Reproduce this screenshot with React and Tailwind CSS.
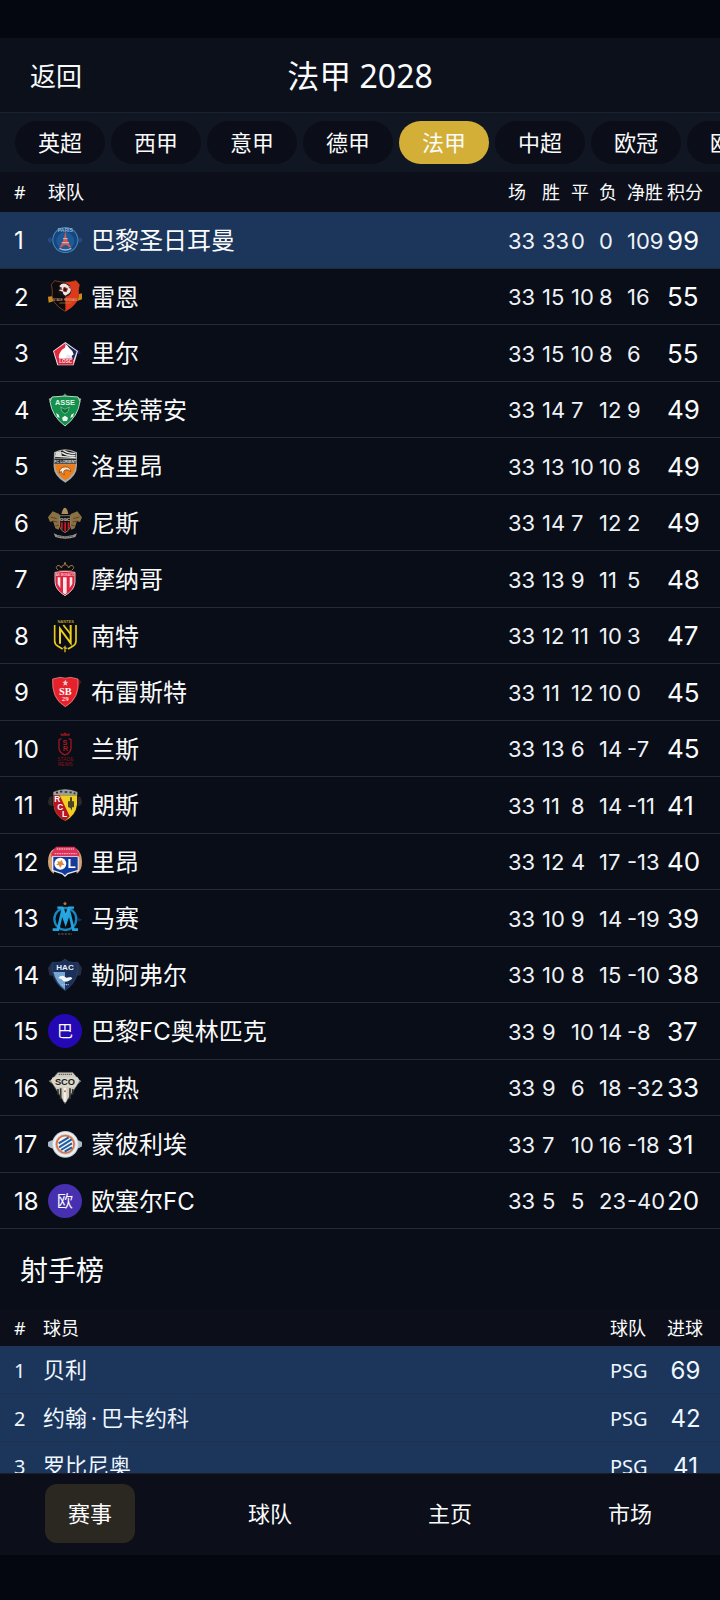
import { useState } from "react";

// 队徽统一画在 102x102 的画布上
function Badge({ children }) {
  return (
    <svg viewBox="0 0 102 102" className="block size-[34px]" aria-hidden="true">
      {children}
    </svg>
  );
}

const badgeFont = "Liberation Sans, sans-serif";

const badges = {
  psg: (
    <Badge>
      <path d="M0 46l8-4 6 8-6 10-8-4zM102 46l-8-4-6 8 6 10 8-4z" fill="#234a7c" />
      <circle cx="52" cy="51" r="39" fill="#4d86b5" />
      <circle cx="52" cy="51" r="36" fill="#14467f" />
      <circle cx="52" cy="54" r="27" fill="#1d5a97" />
      <text x="52" y="27" fontSize="15" fontWeight="bold" textAnchor="middle" fill="#8fb4d2" fontFamily={badgeFont}>
        PARIS
      </text>
      <path d="M52 24l4 22 5 13 9 14h-8c-3-9-17-9-20 0h-8l9-14 5-13z" fill="#d9564c" />
      <path d="M45 47h14M41 59h22" stroke="#b9c8da" strokeWidth="3" />
      <path d="M34 76q18 10 36 0" stroke="#9dbdd8" strokeWidth="4" fill="none" />
    </Badge>
  ),
  rennes: (
    <Badge>
      <path d="M0 50l16-2v16l-14 4zM102 40l-16 4v20l16-6z" fill="#c98a1c" />
      <path d="M20 2q32 10 64 0l10 12-3 18q8 36-39 62Q5 70 13 32L10 14z" fill="#0c0a0c" stroke="#a65a24" strokeWidth="2" />
      <path d="M52 7q18 0 32-5l10 12-3 18q8 36-39 62z" fill="#dd3a1b" />
      <circle cx="50" cy="30" r="20" fill="#1a1416" />
      <path d="M34 18q8-10 20-6l12 8q6 10-2 20l-12 7q-8-3-8-12l-12-4q4-3 12-2z" fill="#ece6e4" />
      <path d="M48 22l10 4-3 9-9-2zM62 20l5 6M40 22l-5 7" stroke="#a02a1c" strokeWidth="3" fill="#1a1416" />
      <text x="51" y="63" fontSize="9" textAnchor="middle" fill="#e3b49a" fontFamily={badgeFont}>
        STADE RENNAIS
      </text>
      <path d="M34 69h36" stroke="#b98c34" strokeWidth="2" />
    </Badge>
  ),
  lille: (
    <Badge>
      <path d="M88 40l11 8-9 9z" fill="#1b1c50" />
      <path d="M52 18l38 27-13 43H28L15 45z" fill="#e9e6ee" />
      <path d="M52 22L18 46l12 38h15l-6-28 13-18z" fill="#e4253a" />
      <path d="M52 22l34 24-10 28-10-30z" fill="#22265c" />
      <path d="M32 62q4-20 18-26l6-10 7 9q10 7 14 20l-6 5-14-5-4 14H34z" fill="#fff" />
      <rect x="30" y="68" width="46" height="18" fill="#d52238" />
      <text x="53" y="82" fontSize="14" fontWeight="bold" textAnchor="middle" fill="#ffe8ea" fontFamily={badgeFont}>
        LOSC
      </text>
    </Badge>
  ),
  asse: (
    <Badge>
      <path d="M2 17l20-6-2 24-13-4zM100 17l-20-6 2 24 13-4z" fill="#9ea5a3" />
      <path d="M44 10l7-9 7 9z" fill="#71816f" />
      <path d="M12 12q39-6 78 0l6 14q-6 44-45 73Q12 70 6 26z" fill="#13914c" stroke="#b9d8c5" strokeWidth="3" />
      <text x="51" y="35" fontSize="22" fontWeight="bold" textAnchor="middle" fill="#e6f3e9" fontFamily={badgeFont}>
        ASSE
      </text>
      <path d="M38 42l13 7 13-7-4 14-9 6-9-6z" fill="#0c6e39" stroke="#8dcaa5" strokeWidth="2" />
      <path d="M24 60l8 5 3 9-7-2zM78 60l-8 5-3 9 7-2zM51 68l9 6-3 10h-12l-3-10z" fill="#f1f7f2" />
    </Badge>
  ),
  lorient: (
    <Badge>
      <path d="M18 10Q51-9 87 10v36q2 34-35 55Q14 80 17 46z" fill="#a9a9a6" />
      <path d="M21 12Q51-5 83 12v14H21z" fill="#17191b" />
      <path d="M46 4q18 12 36 9M40 10q20 12 42 10M21 21l62 5" stroke="#e7e6e2" strokeWidth="4" fill="none" />
      <path d="M22 10l16-4 4 14-20 4z" fill="#d8d7d3" />
      <rect x="19" y="29" width="66" height="15" fill="#24282a" />
      <text x="52" y="41" fontSize="11" fontWeight="bold" textAnchor="middle" fill="#e7e6e2" fontFamily={badgeFont}>
        FC LORIENT
      </text>
      <path d="M21 46h62q0 28-31 48Q22 76 21 46z" fill="#ee7d18" />
      <path d="M34 72q0-18 18-18 16 0 16 14-8-8-16-5-8 3-3 14-9-1-9-10z" fill="#f6e7d2" stroke="#653710" strokeWidth="2" />
    </Badge>
  ),
  nice: (
    <Badge>
      <path d="M34 24L14 16 0 34l6 14 9-3 7 22 10 4 8-26zM68 24l20-8 14 18-6 14-9-3-7 22-10 4-8-26z" fill="#8b7044" />
      <path d="M8 33l18 5M14 45l14 3M94 33l-18 5M88 45l-14 3M22 60l10-3M80 60l-10-3" stroke="#584426" strokeWidth="3" />
      <path d="M44 12q6-14 14 0l3 12H40z" fill="#aa8e5e" />
      <path d="M35 29h32v33q-3 12-16 18-13-6-16-18z" fill="#121114" stroke="#b3a277" strokeWidth="2" />
      <path d="M39 49h5v23l-5-5zM49 49h5v28h-5zM59 49h5v18l-5 5z" fill="#cf1726" />
      <text x="51" y="46" fontSize="13" fontWeight="bold" textAnchor="middle" fill="#e5e1da" fontFamily={badgeFont}>
        OGC
      </text>
      <path d="M17 82l12 5q23 7 46 0l12-5-5 11q-30 11-60 0z" fill="#99958f" />
      <path d="M28 90q24 6 48 0" stroke="#3e3d40" strokeWidth="3" fill="none" strokeDasharray="3 2" />
    </Badge>
  ),
  monaco: (
    <Badge>
      <path d="M30 24q-10-8 0-14 8 0 10 8 2-10 11-10t11 10q2-8 10-8 10 6 0 14" fill="none" stroke="#a07a3c" strokeWidth="3" />
      <circle cx="51" cy="4" r="3" fill="#b98c3f" />
      <path d="M32 26h40" stroke="#7d2c26" strokeWidth="4" />
      <path d="M21 31q30-6 60 0v28q0 24-30 42Q21 83 21 59z" fill="#dd2340" stroke="#e6bfc4" strokeWidth="3" />
      <path d="M29 46h8v32l-8-12zM45 46h11v48l-5 3-6-4zM65 46h8v20l-8 12z" fill="#f7e9eb" />
      <text x="51" y="42" fontSize="9" fontWeight="bold" textAnchor="middle" fill="#f5c8ce" fontFamily={badgeFont}>
        AS MONACO
      </text>
    </Badge>
  ),
  nantes: (
    <Badge>
      <text x="53" y="12" fontSize="12" fontWeight="bold" textAnchor="middle" fill="#b89b28" fontFamily={badgeFont}>
        NANTES
      </text>
      <path d="M20 18v48q0 10 10 16l14 8M84 18v48q0 10-10 16l-14 8" stroke="#e8c81f" strokeWidth="5" fill="none" />
      <path d="M36 74V29l32 43V18" stroke="#efce1d" strokeWidth="6" fill="none" />
      <path d="M46 18l22 28" stroke="#efce1d" strokeWidth="5" />
      <path d="M51 80v20M46 86l12 2" stroke="#d7b823" strokeWidth="4" />
    </Badge>
  ),
  brest: (
    <Badge>
      <path d="M12 14l20-6q19 6 40 0l22 6 6 6-8 14q-2 42-40 63Q14 76 14 34z" fill="#641419" />
      <path d="M14 12l22-5q16 5 32 0l22 5q6 58-38 83Q10 70 14 12z" fill="#e5222b" stroke="#f39b9b" strokeWidth="2" />
      <path d="M52 14l3 6 6 1-5 4 2 7-6-3-6 3 2-7-5-4 6-1z" fill="#f4c6c6" />
      <text x="52" y="59" fontSize="31" fontWeight="bold" textAnchor="middle" fill="#fff" fontFamily="Liberation Serif, serif">
        SB
      </text>
      <text x="52" y="78" fontSize="21" fontWeight="bold" textAnchor="middle" fill="#ffdcdc" fontFamily="Liberation Serif, serif">
        29
      </text>
    </Badge>
  ),
  reims: (
    <Badge>
      <path d="M38 11V3l6 4 7-6 7 6 7-4v8z" fill="#8f151b" />
      <path d="M40 20l-7 3v26q2 14 18 20 16-6 18-20V23l-7-3" stroke="#a0161d" strokeWidth="4" fill="none" />
      <text x="51" y="38" fontSize="22" fontWeight="bold" textAnchor="middle" fill="#a81920" fontFamily={badgeFont}>
        S
      </text>
      <text x="52" y="56" fontSize="22" fontWeight="bold" textAnchor="middle" fill="#a81920" fontFamily={badgeFont}>
        R
      </text>
      <text x="52" y="88" fontSize="15" textAnchor="middle" fill="#7c1219" fontFamily={badgeFont}>
        STADE
      </text>
      <text x="52" y="101" fontSize="14" textAnchor="middle" fill="#8d141b" fontFamily={badgeFont}>
        REIMS
      </text>
    </Badge>
  ),
  lens: (
    <Badge>
      <path d="M4 28l10-4v30q-14 0-14-12zM98 28l-10-4v30q14 0 14-12z" fill="#2c282a" />
      <path d="M14 10q37-16 76 0v40q-4 34-38 51Q16 84 14 50z" fill="#1c181a" />
      <path d="M16 12q35-16 72 0v9H16z" fill="#9ba0a0" />
      <path d="M24 14h6M36 11h7M50 12h8M65 13h6M77 16h5" stroke="#2a2c2e" strokeWidth="5" />
      <path d="M17 22h70v28q-4 32-35 48Q19 82 17 50z" fill="#f0ce22" />
      <path d="M17 22h18l30 63-13 13Q19 82 17 50z" fill="#b91424" />
      <path d="M60 40h6V28h6v12h6v18h-6v10l-5-8-7-3z" fill="#4a4524" />
      <g fill="#fff" fontSize="25" fontWeight="bold" fontFamily={badgeFont}>
        <text x="19" y="43">R</text>
        <text x="28" y="66">C</text>
        <text x="42" y="87">L</text>
      </g>
    </Badge>
  ),
  lyon: (
    <Badge>
      <path d="M20 10Q0 22 0 50q0 26 18 36zM84 10q18 14 18 40 0 26-16 36z" fill="#d3a274" />
      <path d="M24 5h56l14 20v12H10V25z" fill="#dc3158" />
      <path d="M26 12h52M20 26h66" stroke="#f5a0b4" strokeWidth="4" strokeDasharray="5 2" />
      <path d="M12 34h80v44L60 88l-9 8-9-8-30-10z" fill="#e8ebf3" />
      <path d="M16 36h73v39L58 84l-7 7-8-7-27-9z" fill="#123b9e" />
      <circle cx="37" cy="56" r="18" fill="#fff" />
      <path d="M28 48l8 2 6-6 2 10 6 5-9 2-4 8-4-8-9-1 6-5z" fill="#db8a3e" />
      <text x="71" y="70" fontSize="40" fontWeight="bold" textAnchor="middle" fill="#fff" fontFamily={badgeFont}>
        L
      </text>
    </Badge>
  ),
  marseille: (
    <Badge>
      <path d="M51 1l2 4 4 1-3 3 1 4-4-2-4 2 1-4-3-3 4-1z" fill="#b5793d" />
      <path d="M90 50l12 6-10 6z" fill="#123552" />
      <circle cx="52" cy="54" r="33" stroke="#1687bf" strokeWidth="7" fill="none" />
      <path d="M14 86h16l12-52 11 32 11-32 12 52h14" stroke="#22a4df" strokeWidth="8" fill="none" />
      <path d="M28 20h15l10 28 10-28h15" stroke="#2aa9e2" strokeWidth="7" fill="none" />
      <path d="M30 99h42" stroke="#6b6250" strokeWidth="3" strokeDasharray="7 3" />
    </Badge>
  ),
  havre: (
    <Badge>
      <path d="M12 12L0 30l4 22 14 2zM90 12l12 18-4 22-14 2z" fill="#252d46" />
      <path d="M51 3l10 8q16 4 28 2 8 54-38 85Q5 67 13 13q12 2 28-2z" fill="#1a315b" stroke="#31496f" strokeWidth="2" />
      <path d="M16 42h35v53Q24 76 16 42z" fill="#76a7d4" />
      <text x="51" y="36" fontSize="24" fontWeight="bold" textAnchor="middle" fill="#edf2f8" fontFamily={badgeFont}>
        HAC
      </text>
      <path d="M31 60q6-9 16-6l8 5 14-2 4 5-13 8q-14 4-19-6z" fill="#f3f7fa" />
      <path d="M42 80h20" stroke="#a8c4de" strokeWidth="4" strokeDasharray="4 2" />
    </Badge>
  ),
  angers: (
    <Badge>
      <path d="M2 30l12-6v16zM100 30l-12-6v16z" fill="#98968e" />
      <path d="M30 4h44l22 25-45 69L8 29z" fill="#cfccc2" stroke="#55534d" strokeWidth="2" />
      <path d="M32 10h40" stroke="#64625b" strokeWidth="4" strokeDasharray="4 2" />
      <path d="M30 54v17M38 52v32M66 52v32M74 54v17" stroke="#35342f" strokeWidth="5" />
      <path d="M51 50v42" stroke="#f3f0e4" strokeWidth="8" />
      <circle cx="51" cy="61" r="3" fill="#bf6b4f" />
      <path d="M14 19h75l5 10-12 19H22L9 29z" fill="#dad7cb" />
      <text x="51" y="42" fontSize="28" fontWeight="bold" textAnchor="middle" fill="#191918" fontFamily={badgeFont}>
        SCO
      </text>
    </Badge>
  ),
  montpellier: (
    <Badge>
      <path d="M0 45q10-6 18-6v26Q8 65 0 58zM102 45q-10-6-18-6v26q10 0 18-7z" fill="#a9b7c8" />
      <circle cx="52" cy="52" r="40" fill="#c7ccd5" />
      <circle cx="52" cy="52" r="34" stroke="#eef0f2" strokeWidth="6" fill="none" />
      <circle cx="52" cy="52" r="26" fill="#eef3f8" stroke="#de7342" strokeWidth="5" />
      <path d="M32 49l30-18M33 61l38-24M39 69l33-20M50 74l22-13" stroke="#235b9c" strokeWidth="6" />
    </Badge>
  ),
  paris15: (
    <span className="flex size-[34px] items-center justify-center rounded-full bg-[#2308b4] text-base">巴</span>
  ),
  auxerre: (
    <span className="flex size-[34px] items-center justify-center rounded-full bg-[#4630b0] text-base">欧</span>
  ),
};

const leagues = ["英超", "西甲", "意甲", "德甲", "法甲", "中超", "欧冠", "欧联"];

// 队徽, 球队, 场, 胜, 平, 负, 净胜, 积分
const standings = [
  ["psg", "巴黎圣日耳曼", 33, 33, 0, 0, 109, 99],
  ["rennes", "雷恩", 33, 15, 10, 8, 16, 55],
  ["lille", "里尔", 33, 15, 10, 8, 6, 55],
  ["asse", "圣埃蒂安", 33, 14, 7, 12, 9, 49],
  ["lorient", "洛里昂", 33, 13, 10, 10, 8, 49],
  ["nice", "尼斯", 33, 14, 7, 12, 2, 49],
  ["monaco", "摩纳哥", 33, 13, 9, 11, 5, 48],
  ["nantes", "南特", 33, 12, 11, 10, 3, 47],
  ["brest", "布雷斯特", 33, 11, 12, 10, 0, 45],
  ["reims", "兰斯", 33, 13, 6, 14, -7, 45],
  ["lens", "朗斯", 33, 11, 8, 14, -11, 41],
  ["lyon", "里昂", 33, 12, 4, 17, -13, 40],
  ["marseille", "马赛", 33, 10, 9, 14, -19, 39],
  ["havre", "勒阿弗尔", 33, 10, 8, 15, -10, 38],
  ["paris15", "巴黎FC奥林匹克", 33, 9, 10, 14, -8, 37],
  ["angers", "昂热", 33, 9, 6, 18, -32, 33],
  ["montpellier", "蒙彼利埃", 33, 7, 10, 16, -18, 31],
  ["auxerre", "欧塞尔FC", 33, 5, 5, 23, -40, 20],
];

const scorers = [
  ["贝利", "PSG", 69],
  ["约翰·巴卡约科", "PSG", 42],
  ["罗比尼奥", "PSG", 41],
];

const navItems = ["赛事", "球队", "主页", "市场"];

// 外国人名的间隔号两侧留一点空
function PlayerName({ name }) {
  const parts = name.split("·");
  return parts.map((part, i) => (
    <span key={i}>
      {i > 0 && <span className="mx-1">·</span>}
      {part}
    </span>
  ));
}

function StandingsTable() {
  return (
    <table className="w-full table-fixed border-separate border-spacing-0 text-left whitespace-nowrap">
      <colgroup>
        <col className="w-12" />
        <col />
        <col className="w-[34px]" />
        <col className="w-[29px]" />
        <col className="w-7" />
        <col className="w-7" />
        <col className="w-10" />
        <col className="w-[53px]" />
      </colgroup>
      <thead>
        <tr className="h-10 bg-[#0c0f1a] text-lg">
          <th className="p-0 pl-3.5 font-normal">#</th>
          {["球队", "场", "胜", "平", "负", "净胜", "积分"].map((h) => (
            <th key={h} className="p-0 font-normal">
              {h}
            </th>
          ))}
        </tr>
      </thead>
      <tbody className="font-['Inter','Noto_Sans_CJK_SC',sans-serif]">
        {standings.map(([badge, name, ...nums], i) => (
          <tr
            key={name}
            className={`odd:h-[57px] even:h-14 text-[22px] ${i === 0 ? "bg-[#1b355b]" : ""}`}
          >
            <td className="border-b border-[#252a39] p-0 pt-0.5 pl-3.5 text-2xl">{i + 1}</td>
            <td className="border-b border-[#252a39] p-0">
              <div className="flex items-center gap-[9px] text-2xl">
                {badges[badge]}
                <span className="pt-0.5">{name}</span>
              </div>
            </td>
            {nums.map((n, j) => (
              <td
                key={j}
                className={`border-b border-[#252a39] p-0 ${j === 5 ? "text-[26px]" : "pt-0.5 text-[#eef1f6]"}`}
              >
                {n}
              </td>
            ))}
          </tr>
        ))}
      </tbody>
    </table>
  );
}

function ScorersTable() {
  return (
    <table className="w-full table-fixed border-separate border-spacing-0 text-left whitespace-nowrap">
      <colgroup>
        <col className="w-[43px]" />
        <col />
        <col className="w-[57px]" />
        <col className="w-[53px]" />
      </colgroup>
      <thead>
        <tr className="h-[37px] bg-[#0c0f1a] text-lg">
          <th className="p-0 pl-3.5 font-normal">#</th>
          <th className="p-0 font-normal">球员</th>
          <th className="p-0 font-normal">球队</th>
          <th className="p-0 font-normal">进球</th>
        </tr>
      </thead>
      <tbody>
        {scorers.map(([name, team, goals], i) => (
          <tr key={name} className="h-12 bg-[#1b355b] text-[#eef6ff]">
            <td className="border-b border-[#1e3150] p-0 pt-0.5 pl-3.5 text-xl">{i + 1}</td>
            <td className="border-b border-[#1e3150] p-0 text-[22px]">
              <PlayerName name={name} />
            </td>
            <td className="border-b border-[#1e3150] p-0 pt-0.5 text-xl">{team}</td>
            <td className="border-b border-[#1e3150] p-0 pt-0.5 pr-4 text-center font-['Inter',sans-serif] text-2xl">
              {goals}
            </td>
          </tr>
        ))}
      </tbody>
    </table>
  );
}

export default function App() {
  const [league, setLeague] = useState("法甲");
  const [page, setPage] = useState("赛事");

  return (
    <div className="flex h-screen flex-col bg-[#04070f] pt-[38px] pb-[45px] font-['Noto_Sans','Noto_Sans_CJK_SC',sans-serif] text-[#fafbfc]">
      <header className="grid h-[75px] shrink-0 grid-cols-[1fr_auto_1fr] items-center border-b border-[#1b2230] bg-[#0c101b] px-[30px] pt-0.5">
        <button type="button" className="justify-self-start text-[26px]">
          返回
        </button>
        <h1 className="text-[32px]">法甲 2028</h1>
      </header>

      <div className="flex shrink-0 gap-1.5 overflow-hidden bg-[#111623] px-[15px] py-2">
        {leagues.map((l) => (
          <button
            key={l}
            type="button"
            onClick={() => setLeague(l)}
            className={`h-[43px] shrink-0 rounded-full px-[23px] text-[22px] ${
              l === league ? "bg-[#d4af37]" : "bg-[#0b0e19]"
            }`}
          >
            {l}
          </button>
        ))}
      </div>

      <main className="min-h-0 flex-1 overflow-y-auto bg-[#090d17] [scrollbar-width:none]">
        <StandingsTable />
        <h2 className="px-5 pt-5 pb-[18px] text-[28px] leading-[42px]">射手榜</h2>
        <ScorersTable />
      </main>

      {/* 底部导航 */}
      <nav className="grid shrink-0 grid-cols-4 border-t border-[#1b1d28] bg-[#0c0f1a] pt-2.5 pb-3">
        {navItems.map((item) => (
          <button
            key={item}
            type="button"
            onClick={() => setPage(item)}
            className={`h-[59px] justify-self-center rounded-xl px-[23px] text-[22px] ${
              item === page ? "bg-[#2b2822]" : ""
            }`}
          >
            {item}
          </button>
        ))}
      </nav>
    </div>
  );
}
